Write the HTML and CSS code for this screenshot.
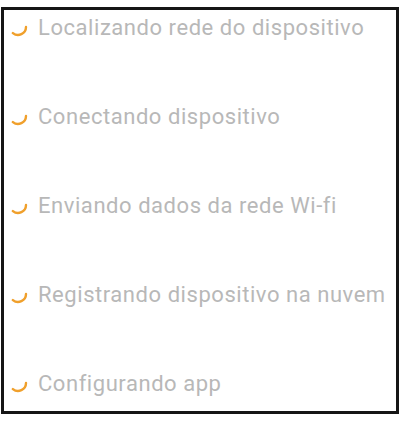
FILE: index.html
```html
<!DOCTYPE html>
<html>
<head>
<meta charset="utf-8">
<title>Configurando dispositivo</title>
<link rel="stylesheet" href="styles.css">
</head>
<body>
<div class="frame">
  <ul class="steps">
    <li class="step">
      <svg class="spin" viewBox="0 0 20 20"><path d="M4.9 16.1A8 8 0 0 0 18 10"/></svg>
      <span>Localizando rede do dispositivo</span>
    </li>
    <li class="step">
      <svg class="spin" viewBox="0 0 20 20"><path d="M4.9 16.1A8 8 0 0 0 18 10"/></svg>
      <span>Conectando dispositivo</span>
    </li>
    <li class="step">
      <svg class="spin" viewBox="0 0 20 20"><path d="M4.9 16.1A8 8 0 0 0 18 10"/></svg>
      <span>Enviando dados da rede Wi-fi</span>
    </li>
    <li class="step">
      <svg class="spin" viewBox="0 0 20 20"><path d="M4.9 16.1A8 8 0 0 0 18 10"/></svg>
      <span>Registrando dispositivo na nuvem</span>
    </li>
    <li class="step">
      <svg class="spin" viewBox="0 0 20 20"><path d="M4.9 16.1A8 8 0 0 0 18 10"/></svg>
      <span>Configurando app</span>
    </li>
  </ul>
</div>
</body>
</html>
```

FILE: styles.css
```css
body{margin:0;background:#fff;font-family:Roboto,"Liberation Sans",sans-serif;}
.frame{margin:7px 0 0 1px;width:398px;height:407px;box-sizing:border-box;border:3px solid #151515;}
.steps{list-style:none;margin:0;padding:5px 0 0 4px;display:flex;flex-direction:column;gap:65px;}
.step{display:flex;align-items:center;gap:10px;height:24px;font-size:22px;letter-spacing:0.55px;color:#b8b8b8;}
.spin{width:20px;height:20px;flex:none;}
.spin path{fill:none;stroke:#f0a02c;stroke-width:2.4;stroke-linecap:round;}
```
